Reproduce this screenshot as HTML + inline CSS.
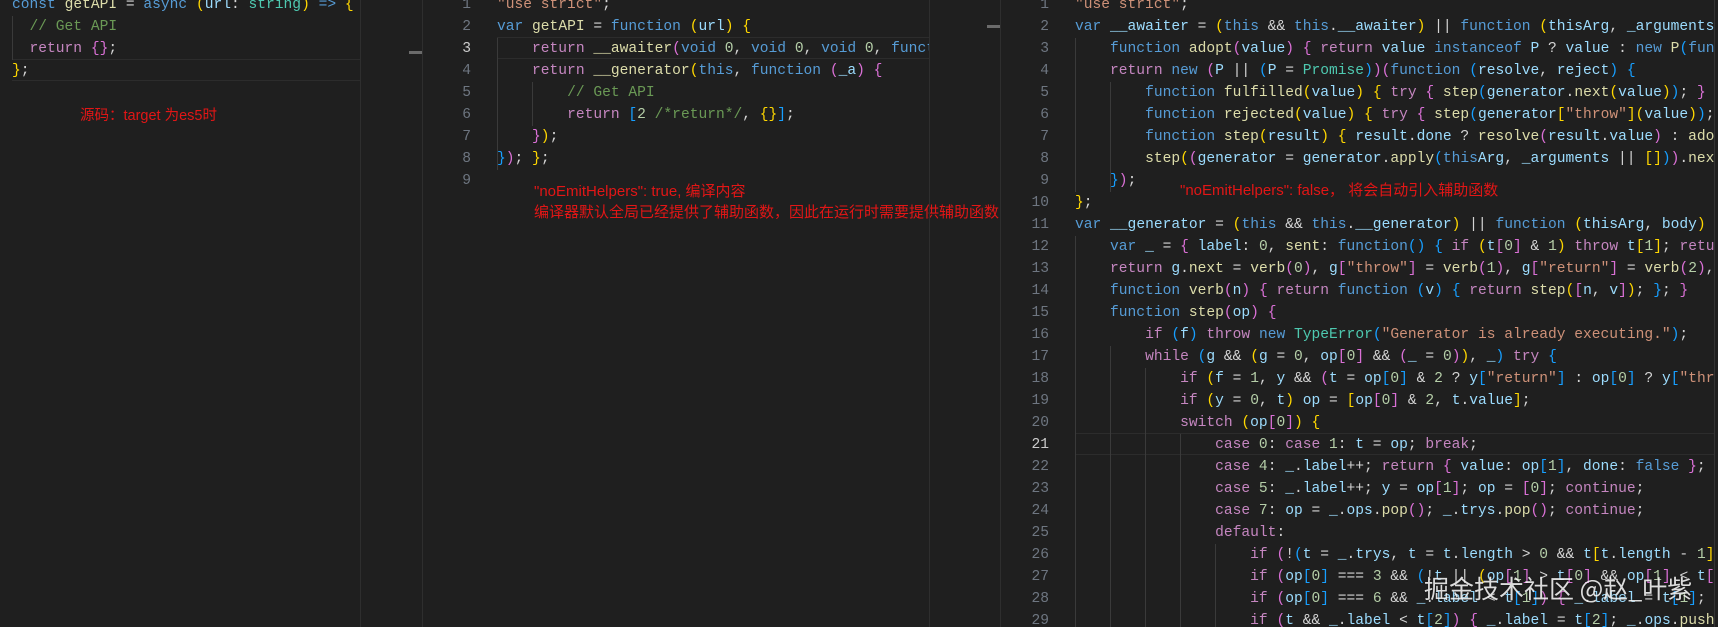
<!DOCTYPE html>
<html><head><meta charset="utf-8"><style>
*{margin:0;padding:0;box-sizing:border-box}
body{width:1718px;height:627px;background:#1f1f1f;overflow:hidden;position:relative;font-family:"Liberation Mono",monospace;font-size:14.6px;color:#d4d4d4}
.pane{position:absolute;top:0;height:627px;overflow:hidden}
.ln{position:absolute;white-space:pre;height:22px;line-height:22px}
.num{position:absolute;text-align:right;width:40px;color:#6e7681;white-space:pre;height:22px;line-height:22px}
.num.a{color:#cccccc}
.cur{position:absolute;height:22px;border-top:1px solid #2c2c2c;border-bottom:1px solid #2c2c2c}
.g{position:absolute;width:1px;background:#3a3a3a}
.vb{position:absolute;top:0;height:627px;width:1px;background:#2e2e2e}
.red{position:absolute;color:#e21616;font-family:"Liberation Sans","Noto Sans CJK SC",sans-serif;font-size:15px;white-space:nowrap;line-height:20px}
.k{color:#569cd6}.c{color:#c586c0}.f{color:#dcdcaa}.v{color:#9cdcfe}.s{color:#ce9178}.n{color:#b5cea8}.t{color:#4ec9b0}.m{color:#6a9955}
.y{color:#ffd700}.p{color:#da70d6}.u{color:#179fff}
.thumb{position:absolute;height:3px;background:#6b6b6b}
.wm{position:absolute;left:1424px;top:570px;font-family:"Noto Sans CJK SC",sans-serif;font-size:25px;color:rgba(255,255,255,0.85);white-space:nowrap;text-shadow:0 0 2px rgba(0,0,0,.4)}
</style></head><body>

<!-- pane 1 -->
<div class="pane" style="left:0;width:360px">
  <div class="cur" style="top:59px;left:12px;width:348px"></div>
  <div class="g" style="left:12px;top:16px;height:44px"></div>
  <div class="ln" style="left:12px;top:-6px"><span class="k">const</span> <span class="f">getAPI</span> = <span class="k">async</span> <span class="y">(</span><span class="v">url</span>: <span class="t">string</span><span class="y">)</span> <span class="k">=&gt;</span> <span class="y">{</span></div>
  <div class="ln" style="left:12px;top:16px">  <span class="m">// Get API</span></div>
  <div class="ln" style="left:12px;top:38px">  <span class="c">return</span> <span class="p">{}</span>;</div>
  <div class="ln" style="left:12px;top:60px"><span class="y">}</span>;</div>
  <div class="red" style="left:80px;top:106px;font-size:14.5px">源码：target 为es5时</div>
</div>
<div class="vb" style="left:360px"></div>
<div class="thumb" style="left:409px;top:51px;width:13px"></div>
<div class="vb" style="left:422px"></div>

<!-- pane 2 -->
<div class="pane" style="left:423px;width:506px">
  <div class="cur" style="top:37px;left:74px;width:432px"></div>
  <div class="g" style="left:74px;top:38px;height:132px"></div>
  <div class="g" style="left:109px;top:82px;height:44px"></div>
  <div class="num" style="left:8px;top:-6px">1</div>
  <div class="num" style="left:8px;top:16px">2</div>
  <div class="num a" style="left:8px;top:38px">3</div>
  <div class="num" style="left:8px;top:60px">4</div>
  <div class="num" style="left:8px;top:82px">5</div>
  <div class="num" style="left:8px;top:104px">6</div>
  <div class="num" style="left:8px;top:126px">7</div>
  <div class="num" style="left:8px;top:148px">8</div>
  <div class="num" style="left:8px;top:170px">9</div>
  <div class="ln" style="left:74px;top:-6px"><span class="s">"use strict"</span>;</div>
  <div class="ln" style="left:74px;top:16px"><span class="k">var</span> <span class="f">getAPI</span> = <span class="k">function</span> <span class="y">(</span><span class="v">url</span><span class="y">)</span> <span class="y">{</span></div>
  <div class="ln" style="left:74px;top:38px">    <span class="c">return</span> <span class="f">__awaiter</span><span class="p">(</span><span class="k">void</span> <span class="n">0</span>, <span class="k">void</span> <span class="n">0</span>, <span class="k">void</span> <span class="n">0</span>, <span class="k">function</span> <span class="u">()</span> <span class="u">{</span></div>
  <div class="ln" style="left:74px;top:60px">    <span class="c">return</span> <span class="f">__generator</span><span class="y">(</span><span class="k">this</span>, <span class="k">function</span> <span class="p">(</span><span class="v">_a</span><span class="p">)</span> <span class="p">{</span></div>
  <div class="ln" style="left:74px;top:82px">        <span class="m">// Get API</span></div>
  <div class="ln" style="left:74px;top:104px">        <span class="c">return</span> <span class="u">[</span><span class="n">2</span> <span class="m">/*return*/</span>, <span class="y">{}</span><span class="u">]</span>;</div>
  <div class="ln" style="left:74px;top:126px">    <span class="p">}</span><span class="y">)</span>;</div>
  <div class="ln" style="left:74px;top:148px"><span class="u">}</span><span class="p">)</span>; <span class="y">}</span>;</div>
</div>
<div class="red" style="left:534px;top:182px">"noEmitHelpers": true, 编译内容</div>
<div class="red" style="left:534px;top:203px">编译器默认全局已经提供了辅助函数，因此在运行时需要提供辅助函数</div>
<div class="vb" style="left:929px"></div>
<div class="thumb" style="left:987px;top:25px;width:13px"></div>
<div class="vb" style="left:1000px"></div>

<!-- pane 3 -->
<div class="pane" style="left:1001px;width:713px">
  <div class="cur" style="top:433px;left:74px;width:639px"></div>
  <div class="g" style="left:74px;top:38px;height:154px"></div>
  <div class="g" style="left:109px;top:82px;height:110px"></div>
  <div class="g" style="left:74px;top:236px;height:391px"></div>
  <div class="g" style="left:109px;top:346px;height:281px"></div>
  <div class="g" style="left:144px;top:368px;height:259px"></div>
  <div class="g" style="left:179px;top:434px;height:193px"></div>
  <div class="g" style="left:214px;top:544px;height:83px"></div>
  <div class="num" style="left:8px;top:-6px">1</div>
  <div class="num" style="left:8px;top:16px">2</div>
  <div class="num" style="left:8px;top:38px">3</div>
  <div class="num" style="left:8px;top:60px">4</div>
  <div class="num" style="left:8px;top:82px">5</div>
  <div class="num" style="left:8px;top:104px">6</div>
  <div class="num" style="left:8px;top:126px">7</div>
  <div class="num" style="left:8px;top:148px">8</div>
  <div class="num" style="left:8px;top:170px">9</div>
  <div class="num" style="left:8px;top:192px">10</div>
  <div class="num" style="left:8px;top:214px">11</div>
  <div class="num" style="left:8px;top:236px">12</div>
  <div class="num" style="left:8px;top:258px">13</div>
  <div class="num" style="left:8px;top:280px">14</div>
  <div class="num" style="left:8px;top:302px">15</div>
  <div class="num" style="left:8px;top:324px">16</div>
  <div class="num" style="left:8px;top:346px">17</div>
  <div class="num" style="left:8px;top:368px">18</div>
  <div class="num" style="left:8px;top:390px">19</div>
  <div class="num" style="left:8px;top:412px">20</div>
  <div class="num a" style="left:8px;top:434px">21</div>
  <div class="num" style="left:8px;top:456px">22</div>
  <div class="num" style="left:8px;top:478px">23</div>
  <div class="num" style="left:8px;top:500px">24</div>
  <div class="num" style="left:8px;top:522px">25</div>
  <div class="num" style="left:8px;top:544px">26</div>
  <div class="num" style="left:8px;top:566px">27</div>
  <div class="num" style="left:8px;top:588px">28</div>
  <div class="num" style="left:8px;top:610px">29</div>

  <div class="ln" style="left:74px;top:-6px"><span class="s">"use strict"</span>;</div>
  <div class="ln" style="left:74px;top:16px"><span class="k">var</span> <span class="v">__awaiter</span> = <span class="y">(</span><span class="k">this</span> &amp;&amp; <span class="k">this</span>.<span class="v">__awaiter</span><span class="y">)</span> || <span class="k">function</span> <span class="y">(</span><span class="v">thisArg</span>, <span class="v">_arguments</span>, <span class="v">P</span>, <span class="v">generator</span><span class="y">)</span> <span class="y">{</span></div>
  <div class="ln" style="left:74px;top:38px">    <span class="k">function</span> <span class="f">adopt</span><span class="p">(</span><span class="v">value</span><span class="p">)</span> <span class="p">{</span> <span class="c">return</span> <span class="v">value</span> <span class="k">instanceof</span> <span class="v">P</span> ? <span class="v">value</span> : <span class="k">new</span> <span class="f">P</span><span class="u">(</span><span class="k">function</span> (resolve) {</div>
  <div class="ln" style="left:74px;top:60px">    <span class="c">return</span> <span class="k">new</span> <span class="p">(</span><span class="v">P</span> || <span class="u">(</span><span class="v">P</span> = <span class="t">Promise</span><span class="u">)</span><span class="p">)(</span><span class="k">function</span> <span class="u">(</span><span class="v">resolve</span>, <span class="v">reject</span><span class="u">)</span> <span class="u">{</span></div>
  <div class="ln" style="left:74px;top:82px">        <span class="k">function</span> <span class="f">fulfilled</span><span class="y">(</span><span class="v">value</span><span class="y">)</span> <span class="y">{</span> <span class="c">try</span> <span class="p">{</span> <span class="f">step</span><span class="u">(</span><span class="v">generator</span>.<span class="f">next</span><span class="y">(</span><span class="v">value</span><span class="y">)</span><span class="u">)</span>; <span class="p">}</span> <span class="c">catch</span> (e) { reject(e); } }</div>
  <div class="ln" style="left:74px;top:104px">        <span class="k">function</span> <span class="f">rejected</span><span class="y">(</span><span class="v">value</span><span class="y">)</span> <span class="y">{</span> <span class="c">try</span> <span class="p">{</span> <span class="f">step</span><span class="u">(</span><span class="v">generator</span><span class="y">[</span><span class="s">"throw"</span><span class="y">](</span><span class="v">value</span><span class="y">)</span><span class="u">)</span>; } catch (e) { reject(e); } }</div>
  <div class="ln" style="left:74px;top:126px">        <span class="k">function</span> <span class="f">step</span><span class="y">(</span><span class="v">result</span><span class="y">)</span> <span class="y">{</span> <span class="v">result</span>.<span class="v">done</span> ? <span class="f">resolve</span><span class="p">(</span><span class="v">result</span>.<span class="v">value</span><span class="p">)</span> : <span class="f">adopt</span>(result.value).then(fulfilled, rejected); }</div>
  <div class="ln" style="left:74px;top:148px">        <span class="f">step</span><span class="y">(</span><span class="p">(</span><span class="v">generator</span> = <span class="v">generator</span>.<span class="f">apply</span><span class="u">(</span><span class="k">this</span><span class="v">Arg</span>, <span class="v">_arguments</span> || <span class="y">[]</span><span class="u">)</span><span class="p">)</span>.<span class="f">next</span>());</div>
  <div class="ln" style="left:74px;top:170px">    <span class="u">}</span><span class="p">)</span>;</div>
  <div class="ln" style="left:74px;top:192px"><span class="y">}</span>;</div>
  <div class="ln" style="left:74px;top:214px"><span class="k">var</span> <span class="v">__generator</span> = <span class="y">(</span><span class="k">this</span> &amp;&amp; <span class="k">this</span>.<span class="v">__generator</span><span class="y">)</span> || <span class="k">function</span> <span class="y">(</span><span class="v">thisArg</span>, <span class="v">body</span><span class="y">)</span> <span class="y">{</span></div>
  <div class="ln" style="left:74px;top:236px">    <span class="k">var</span> <span class="v">_</span> = <span class="p">{</span> <span class="v">label</span>: <span class="n">0</span>, <span class="f">sent</span>: <span class="k">function</span><span class="u">()</span> <span class="u">{</span> <span class="c">if</span> <span class="y">(</span><span class="v">t</span><span class="p">[</span><span class="n">0</span><span class="p">]</span> &amp; <span class="n">1</span><span class="y">)</span> <span class="c">throw</span> <span class="v">t</span><span class="y">[</span><span class="n">1</span><span class="y">]</span>; <span class="c">return</span> t[1]; }, trys: [], ops: [] }, f, y, t, g;</div>
  <div class="ln" style="left:74px;top:258px">    <span class="c">return</span> <span class="v">g</span>.<span class="f">next</span> = <span class="f">verb</span><span class="p">(</span><span class="n">0</span><span class="p">)</span>, <span class="v">g</span><span class="p">[</span><span class="s">"throw"</span><span class="p">]</span> = <span class="f">verb</span><span class="p">(</span><span class="n">1</span><span class="p">)</span>, <span class="v">g</span><span class="p">[</span><span class="s">"return"</span><span class="p">]</span> = <span class="f">verb</span><span class="p">(</span><span class="n">2</span><span class="p">)</span>, typeof Symbol</div>
  <div class="ln" style="left:74px;top:280px">    <span class="k">function</span> <span class="f">verb</span><span class="p">(</span><span class="v">n</span><span class="p">)</span> <span class="p">{</span> <span class="c">return</span> <span class="k">function</span> <span class="u">(</span><span class="v">v</span><span class="u">)</span> <span class="u">{</span> <span class="c">return</span> <span class="f">step</span><span class="y">(</span><span class="p">[</span><span class="v">n</span>, <span class="v">v</span><span class="p">]</span><span class="y">)</span>; <span class="u">}</span>; <span class="p">}</span></div>
  <div class="ln" style="left:74px;top:302px">    <span class="k">function</span> <span class="f">step</span><span class="p">(</span><span class="v">op</span><span class="p">)</span> <span class="p">{</span></div>
  <div class="ln" style="left:74px;top:324px">        <span class="c">if</span> <span class="u">(</span><span class="v">f</span><span class="u">)</span> <span class="c">throw</span> <span class="k">new</span> <span class="t">TypeError</span><span class="u">(</span><span class="s">"Generator is already executing."</span><span class="u">)</span>;</div>
  <div class="ln" style="left:74px;top:346px">        <span class="c">while</span> <span class="u">(</span><span class="v">g</span> &amp;&amp; <span class="y">(</span><span class="v">g</span> = <span class="n">0</span>, <span class="v">op</span><span class="p">[</span><span class="n">0</span><span class="p">]</span> &amp;&amp; <span class="p">(</span><span class="v">_</span> = <span class="n">0</span><span class="p">)</span><span class="y">)</span>, <span class="v">_</span><span class="u">)</span> <span class="c">try</span> <span class="u">{</span></div>
  <div class="ln" style="left:74px;top:368px">            <span class="c">if</span> <span class="y">(</span><span class="v">f</span> = <span class="n">1</span>, <span class="v">y</span> &amp;&amp; <span class="p">(</span><span class="v">t</span> = <span class="v">op</span><span class="u">[</span><span class="n">0</span><span class="u">]</span> &amp; <span class="n">2</span> ? <span class="v">y</span><span class="u">[</span><span class="s">"return"</span><span class="u">]</span> : <span class="v">op</span><span class="u">[</span><span class="n">0</span><span class="u">]</span> ? <span class="v">y</span><span class="u">[</span><span class="s">"throw"</span>] || ((t = y["return"]) &amp;&amp; t.call(y), 0)</div>
  <div class="ln" style="left:74px;top:390px">            <span class="c">if</span> <span class="y">(</span><span class="v">y</span> = <span class="n">0</span>, <span class="v">t</span><span class="y">)</span> <span class="v">op</span> = <span class="y">[</span><span class="v">op</span><span class="p">[</span><span class="n">0</span><span class="p">]</span> &amp; <span class="n">2</span>, <span class="v">t</span>.<span class="v">value</span><span class="y">]</span>;</div>
  <div class="ln" style="left:74px;top:412px">            <span class="c">switch</span> <span class="y">(</span><span class="v">op</span><span class="p">[</span><span class="n">0</span><span class="p">]</span><span class="y">)</span> <span class="y">{</span></div>
  <div class="ln" style="left:74px;top:434px">                <span class="c">case</span> <span class="n">0</span>: <span class="c">case</span> <span class="n">1</span>: <span class="v">t</span> = <span class="v">op</span>; <span class="c">break</span>;</div>
  <div class="ln" style="left:74px;top:456px">                <span class="c">case</span> <span class="n">4</span>: <span class="v">_</span>.<span class="v">label</span>++; <span class="c">return</span> <span class="p">{</span> <span class="v">value</span>: <span class="v">op</span><span class="u">[</span><span class="n">1</span><span class="u">]</span>, <span class="v">done</span>: <span class="k">false</span> <span class="p">}</span>;</div>
  <div class="ln" style="left:74px;top:478px">                <span class="c">case</span> <span class="n">5</span>: <span class="v">_</span>.<span class="v">label</span>++; <span class="v">y</span> = <span class="v">op</span><span class="p">[</span><span class="n">1</span><span class="p">]</span>; <span class="v">op</span> = <span class="p">[</span><span class="n">0</span><span class="p">]</span>; <span class="c">continue</span>;</div>
  <div class="ln" style="left:74px;top:500px">                <span class="c">case</span> <span class="n">7</span>: <span class="v">op</span> = <span class="v">_</span>.<span class="v">ops</span>.<span class="f">pop</span><span class="p">()</span>; <span class="v">_</span>.<span class="v">trys</span>.<span class="f">pop</span><span class="p">()</span>; <span class="c">continue</span>;</div>
  <div class="ln" style="left:74px;top:522px">                <span class="c">default</span>:</div>
  <div class="ln" style="left:74px;top:544px">                    <span class="c">if</span> <span class="p">(</span>!<span class="u">(</span><span class="v">t</span> = <span class="v">_</span>.<span class="v">trys</span>, <span class="v">t</span> = <span class="v">t</span>.<span class="v">length</span> &gt; <span class="n">0</span> &amp;&amp; <span class="v">t</span><span class="y">[</span><span class="v">t</span>.<span class="v">length</span> - <span class="n">1</span><span class="y">]</span><span class="u">)</span> &amp;&amp; (op[0] === 6 || op[0] === 2)) { _ = 0; continue; }</div>
  <div class="ln" style="left:74px;top:566px">                    <span class="c">if</span> <span class="p">(</span><span class="v">op</span><span class="u">[</span><span class="n">0</span><span class="u">]</span> === <span class="n">3</span> &amp;&amp; <span class="u">(</span>!<span class="v">t</span> || <span class="y">(</span><span class="v">op</span><span class="p">[</span><span class="n">1</span><span class="p">]</span> &gt; <span class="v">t</span><span class="p">[</span><span class="n">0</span><span class="p">]</span> &amp;&amp; <span class="v">op</span><span class="p">[</span><span class="n">1</span><span class="p">]</span> &lt; <span class="v">t</span><span class="p">[</span><span class="n">3</span>]))) { _.label = op[1]; break; }</div>
  <div class="ln" style="left:74px;top:588px">                    <span class="c">if</span> <span class="p">(</span><span class="v">op</span><span class="u">[</span><span class="n">0</span><span class="u">]</span> === <span class="n">6</span> &amp;&amp; <span class="v">_</span>.<span class="v">label</span> &lt; <span class="v">t</span><span class="u">[</span><span class="n">1</span><span class="u">]</span><span class="p">)</span> <span class="p">{</span> <span class="v">_</span>.<span class="v">label</span> = <span class="v">t</span><span class="u">[</span><span class="n">1</span><span class="u">]</span>; t = op; break; }</div>
  <div class="ln" style="left:74px;top:610px">                    <span class="c">if</span> <span class="p">(</span><span class="v">t</span> &amp;&amp; <span class="v">_</span>.<span class="v">label</span> &lt; <span class="v">t</span><span class="u">[</span><span class="n">2</span><span class="u">]</span><span class="p">)</span> <span class="p">{</span> <span class="v">_</span>.<span class="v">label</span> = <span class="v">t</span><span class="u">[</span><span class="n">2</span><span class="u">]</span>; <span class="v">_</span>.<span class="v">ops</span>.<span class="f">push</span>(op); break; }</div>
</div>
<div class="red" style="left:1180px;top:181px">"noEmitHelpers": false， 将会自动引入辅助函数</div>
<div class="vb" style="left:1714px;background:#333"></div>
<div class="wm">掘金技术社区 @赵_叶紫</div>
</body></html>
